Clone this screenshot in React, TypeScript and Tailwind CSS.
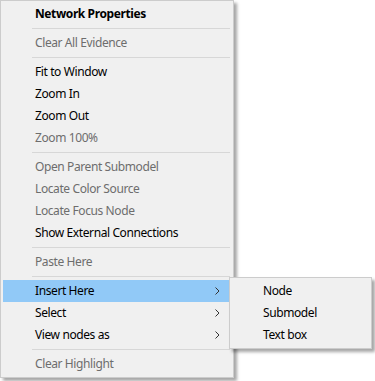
import React from 'react';

type Item =
  | { sep: true }
  | { label: string; disabled?: boolean; bold?: boolean; sub?: boolean; active?: boolean };

const items: Item[] = [
  { label: 'Network Properties', bold: true },
  { sep: true },
  { label: 'Clear All Evidence', disabled: true },
  { sep: true },
  { label: 'Fit to Window' },
  { label: 'Zoom In' },
  { label: 'Zoom Out' },
  { label: 'Zoom 100%', disabled: true },
  { sep: true },
  { label: 'Open Parent Submodel', disabled: true },
  { label: 'Locate Color Source', disabled: true },
  { label: 'Locate Focus Node', disabled: true },
  { label: 'Show External Connections' },
  { sep: true },
  { label: 'Paste Here', disabled: true },
  { sep: true },
  { label: 'Insert Here', sub: true, active: true },
  { label: 'Select', sub: true },
  { label: 'View nodes as', sub: true },
  { sep: true },
  { label: 'Clear Highlight', disabled: true },
];

const subItems = ['Node', 'Submodel', 'Text box'];

function Chevron() {
  return (
    <svg width="5" height="8" viewBox="0 0 5 8" className="absolute right-[11px] top-[7px]">
      <path d="M0.5 0.5 L4 4 L0.5 7.5" fill="none" stroke="#333" strokeWidth="1" />
    </svg>
  );
}

export default function App() {
  return (
    <div
      className="relative h-[381px] w-[375px] bg-white text-[12px] leading-none tracking-[-0.4px]"
      style={{ fontFamily: '"Segoe UI", "Noto Sans", sans-serif' }}
    >
      <div className="flex w-[234px] flex-col border border-[#cccccc] bg-[#f0f0f0] px-[2px] py-[2px] shadow-[3px_3px_3px_rgba(0,0,0,0.35)]">
        {items.map((item, i) => {
          if ('sep' in item) {
            return (
              <div key={i} className="flex h-[7px] items-center pl-[29px] pr-[1px]">
                <div className="h-px w-full bg-[#d7d7d7]" />
              </div>
            );
          }
          return (
            <div
              key={i}
              className={`relative flex h-[22px] items-center pl-[32px] ${item.active ? 'bg-[#91c9f7]' : ''} ${
                item.disabled ? 'text-[#6d6d6d]' : 'text-black'
              } ${item.bold ? 'font-bold' : ''}`}
            >
              {item.label}
              {item.sub && <Chevron />}
            </div>
          );
        })}
      </div>

      <div className="absolute left-[229px] top-[277px] flex w-[143px] flex-col border border-[#cccccc] bg-[#f0f0f0] px-[2px] py-[2px] shadow-[3px_3px_3px_rgba(0,0,0,0.35)]">
        {subItems.map((s) => (
          <div key={s} className="flex h-[22px] items-center pl-[31px] text-black">
            {s}
          </div>
        ))}
      </div>
    </div>
  );
}
